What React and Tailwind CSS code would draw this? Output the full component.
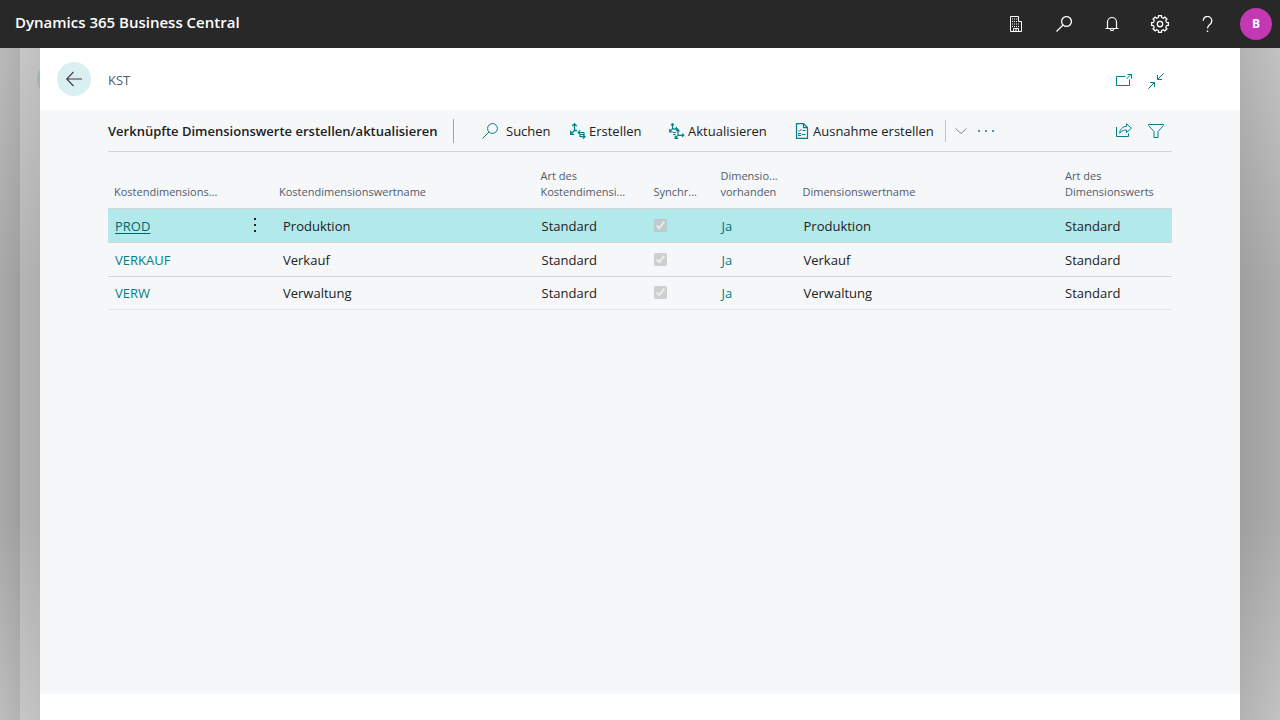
const rows = [
  { code: 'PROD', name: 'Produktion', selected: true },
  { code: 'VERKAUF', name: 'Verkauf' },
  { code: 'VERW', name: 'Verwaltung' },
]

const Icon = ({ size = 'w-4 h-4', children }) => (
  <svg viewBox="0 0 16 16" className={`${size} shrink-0`} fill="none" stroke="currentColor" aria-hidden="true">
    {children}
  </svg>
)

const BuildingIcon = () => (
  <Icon>
    <path d="M2.5 15.5V.5h8v5h3v10z M5.5 15.5v-3h5v3 M8 12.5v3" />
    <path d="M4 3h1m1 0h1m1 0h1M4 5.5h1m1 0h1m1 0h1M4 8h1m1 0h1m1 0h1m1 0h1M4 10.5h1m1 0h1m1 0h1m1 0h1" />
  </Icon>
)

const SearchIcon = ({ strokeWidth = 1 }) => (
  <Icon>
    <g strokeWidth={strokeWidth}>
      <circle cx="10.5" cy="5.5" r="4.9" />
      <path d="M7 9 .5 15.5" />
    </g>
  </Icon>
)

const BellIcon = () => (
  <Icon>
    <path d="M1.5 12.5h13 M3.5 12.5V6a4.5 4.5 0 0 1 9 0v6.5 M6.2 12.8a1.8 1.8 0 0 0 3.6 0" strokeWidth="1.2" />
  </Icon>
)

const teeth = [0, 45, 90, 135, 180, 225, 270, 315]

const GearIcon = () => (
  <Icon size="w-[18px] h-[18px]">
    <circle cx="8" cy="8" r="2.4" strokeWidth="1.2" />
    {teeth.map(a => (
      <path key={a} d="M5.7 2.5 6.6 2.1 6.7.6h2.6l.1 1.5.9.4" transform={`rotate(${a} 8 8)`} strokeWidth="1.2" />
    ))}
  </Icon>
)

const HelpIcon = () => (
  <Icon>
    <path d="M3.2 4.8a4.3 4.3 0 1 1 7.2 3.1C8.8 9.3 7.5 10 7.5 12.5" strokeWidth="1.3" />
    <path d="M6.8 15.2h1.4" strokeWidth="1.5" />
  </Icon>
)

const BackIcon = () => (
  <Icon>
    <path d="M16 8H.8M7.5 1 .7 8l6.8 7" strokeWidth="1.1" />
  </Icon>
)

const PopoutIcon = () => (
  <Icon>
    <path d="M9.5 3.5H.5v9h13v-6 M10.5 6l4.7-4.7 M11.5 1.5h4v4" />
  </Icon>
)

const CollapseIcon = () => (
  <Icon>
    <path d="M15.7.3 9.5 6.5 M9.5 2v4.5H14 M.3 15.7l6.2-6.2 M2 9.5h4.5V14" />
  </Icon>
)

const CreateIcon = () => (
  <Icon>
    <path d="M4.5.8v6.7L1 11 M2.3 3 4.5.8 6.7 3 M.7 7.8v3.5h3.5 M4.5 7.5h2.7" strokeWidth="1.3" />
    <path d="M14 9.5H8.3 M10.3 7.3 8.1 9.5l2.2 2.2 M14 9.5v2H10v2.2h5 M13 11.7l2 2-2 2" strokeWidth="1.2" />
  </Icon>
)

const UpdateIcon = () => (
  <Icon>
    <path d="M3.5.7v5.1L.9 8.7 M2 2.2 3.5.7 5 2.2 M.7 6v3h3 M3.5 5.8h4.7 M6.8 4.2l1.6 1.6-1.6 1.6" strokeWidth="1.2" />
    <path d="M9 6.7v5.6l-2.5 2.9 M7.5 8.2 9 6.7l1.5 1.5 M6.2 12.4v3h3 M9 12.3h5.7 M13.2 10.7l1.6 1.6-1.6 1.6 M4 9.5h3M4 11.5h2.5" strokeWidth="1.2" />
  </Icon>
)

const ChecklistIcon = () => (
  <Icon>
    <path d="M2.5.6h7l4 4v10.8h-11z M9.5.6v4h4" strokeWidth="1.2" />
    <path d="m4.5 7.3 1 1 2-2.3 M8.5 7.5h3 M8 11.5h3.5" />
    <rect x="4.7" y="10.5" width="2" height="2" />
  </Icon>
)

const ShareIcon = () => (
  <Icon>
    <path d="M.5 4v9.5h12v-3" />
    <path d="M10.5.8 15.4 5.3l-4.9 4.2V7C7.5 6.8 5.5 7.8 3.7 10.3 4 6.3 6.5 3.6 10.5 3.3z" />
  </Icon>
)

const FilterIcon = () => (
  <Icon>
    <path d="M.5 1.5h15v1L10 8.5v6H6v-6L.5 2.5z" />
  </Icon>
)

const TopButton = ({ label, children }) => (
  <button aria-label={label} className="w-12 h-12 flex items-center justify-center text-white">{children}</button>
)

const TealButton = ({ label, children }) => (
  <button aria-label={label} className="w-8 h-8 flex items-center justify-center text-[#008089]">{children}</button>
)

const Action = ({ label, className, children }) => (
  <button className={`flex items-center whitespace-nowrap text-[#212121] ${className}`}>
    <span className="text-[#008089]">{children}</span>
    <span className="pt-[2px]">{label}</span>
  </button>
)

const Th = ({ children, pad = 'pl-[6px]' }) => (
  <th scope="col" className={`${pad} pb-2 align-bottom text-left font-normal text-[11px] leading-4 text-[#505c6d] whitespace-nowrap`}>
    {children}
  </th>
)

const Row = ({ row }) => (
  <tr className={`h-[34px] border-b border-[#d0d4d9] last:h-[33px] last:border-[#e2e4e7] ${row.selected ? 'bg-[#b2e9eb]' : ''}`}>
    <td className="pl-[7px] pt-[3px]">
      <a href="#" className={row.selected ? 'text-[#00666d] underline underline-offset-2' : 'text-[#008089]'}>{row.code}</a>
    </td>
    <td>
      {row.selected && (
        <button aria-label="Weitere Optionen" className="w-full flex justify-center text-[#212121]">
          <svg viewBox="0 0 16 16" className="w-4 h-4" fill="currentColor" aria-hidden="true">
            <path d="M7 1h2v2H7zM7 7h2v2H7zM7 13h2v2H7z" />
          </svg>
        </button>
      )}
    </td>
    <td className="pl-[10px] pt-[3px]">{row.name}</td>
    <td className="pl-[7px] pt-[3px]">Standard</td>
    <td className="pl-[6px]">
      <input type="checkbox" checked disabled readOnly aria-label={`Synchronisiert ${row.code}`} className="block w-[13px] h-[13px]" />
    </td>
    <td className="pl-[7px] pt-[3px]"><a href="#" className={row.selected ? 'text-[#00727a]' : 'text-[#008089]'}>Ja</a></td>
    <td className="pl-[7px] pt-[3px]">{row.name}</td>
    <td className="pl-[7px] pt-[3px]">Standard</td>
  </tr>
)

export default function App() {
  return (
    <div className="min-h-screen flex flex-col bg-[#c4c4c4] font-['Open_Sans',sans-serif] text-[13px] text-[#212121]">
      {/* Top bar */}
      <header className="h-12 bg-[#282828] flex items-center pl-[15px] pr-2 text-white">
        <h1 className="flex-1 text-[15px] font-semibold pb-1">Dynamics 365 Business Central</h1>
        <TopButton label="Unternehmen"><BuildingIcon /></TopButton>
        <TopButton label="Suchen"><SearchIcon strokeWidth={1.3} /></TopButton>
        <TopButton label="Benachrichtigungen"><BellIcon /></TopButton>
        <TopButton label="Einstellungen"><GearIcon /></TopButton>
        <TopButton label="Hilfe"><HelpIcon /></TopButton>
        <button className="w-8 h-8 ml-2 rounded-full bg-[#c239b3] text-xs font-bold">B</button>
      </header>

      <div className="flex-1 flex">
        {/* Stacked pages behind the current one */}
        <div className="w-5 bg-[linear-gradient(to_right,#00000000,#0000000f),linear-gradient(to_bottom,#bababa,#a8a8a8_35%,#a8a8a8_70%,#bdbdbd)]" />
        <div className="w-5 pt-[14px] flex items-start justify-end bg-[linear-gradient(to_right,#00000000,#00000008),linear-gradient(to_bottom,#c6c6c6,#b4b4b4_35%,#b4b4b4_70%,#c6c6c6)]">
          <div className="w-[3px] h-[34px] overflow-hidden">
            <div className="w-[34px] h-[34px] rounded-full bg-[#a4b2b3]" />
          </div>
        </div>

        <main className="flex-1 min-w-0 flex flex-col bg-white">
          <div className="h-[62px] flex items-center pl-[17px] pr-[68px]">
            <button aria-label="Zurück" className="w-[34px] h-[34px] rounded-full bg-[#d9eff1] text-[#3b3b3b] flex items-center justify-center">
              <BackIcon />
            </button>
            <h2 className="flex-1 pl-[17px] pt-1 text-[13px] text-[#505c6d]">KST</h2>
            <div className="flex pt-1">
              <TealButton label="In neuem Fenster öffnen"><PopoutIcon /></TealButton>
              <TealButton label="Verkleinern"><CollapseIcon /></TealButton>
            </div>
          </div>

          <section className="flex-1 bg-[#f5f7f9] px-[68px] mb-[26px]">
            <div className="h-[42px] flex items-center border-b border-[#d0d4d9]">
              <h3 className="text-[13px] font-semibold whitespace-nowrap w-[345px] pt-[2px]">Verknüpfte Dimensionswerte erstellen/aktualisieren</h3>
              <div className="w-px h-6 bg-[#a0a4a9]" />
              <Action label="Suchen" className="ml-7 gap-2 w-[88px]"><SearchIcon /></Action>
              <Action label="Erstellen" className="gap-[3px] w-[99px]"><CreateIcon /></Action>
              <Action label="Aktualisieren" className="gap-[3px] w-[125px]"><UpdateIcon /></Action>
              <Action label="Ausnahme erstellen" className="gap-[3px] w-[151px]"><ChecklistIcon /></Action>
              <div className="w-px h-[22px] bg-[#bfc3c7]" />
              <button aria-label="Mehr anzeigen" className="w-[30px] h-6 flex items-center justify-center text-[#808588]">
                <Icon><path d="m2.5 5.5 5.5 5 5.5-5" /></Icon>
              </button>
              <button aria-label="Weitere Aktionen" className="w-5 h-6 flex items-center justify-center text-[#3a9fa6]">
                <svg viewBox="0 0 16 16" className="w-4 h-4" fill="currentColor" aria-hidden="true">
                  <path d="M0 7h2v2H0zM7 7h2v2H7zM14 7h2v2h-2z" />
                </svg>
              </button>
              <div className="flex-1" />
              <TealButton label="Teilen"><ShareIcon /></TealButton>
              <TealButton label="Filter"><FilterIcon /></TealButton>
            </div>

            <table className="w-full table-fixed border-collapse">
              <colgroup>
                <col className="w-[128px]" />
                <col className="w-[37px]" />
                <col />
                <col className="w-[113px]" />
                <col className="w-[67px]" />
                <col className="w-[82px]" />
                <col />
                <col className="w-[114px]" />
              </colgroup>
              <thead>
                <tr className="h-14 border-b border-[#d0d4d9]">
                  <Th>Kostendimensions...</Th>
                  <td />
                  <Th>Kostendimensionswertname</Th>
                  <Th>Art des<br />Kostendimensi...</Th>
                  <Th>Synchr...</Th>
                  <Th>Dimensio...<br />vorhanden</Th>
                  <Th>Dimensionswertname</Th>
                  <Th pad="pl-[7px]">Art des<br />Dimensionswerts</Th>
                </tr>
              </thead>
              <tbody>
                {rows.map(row => <Row key={row.code} row={row} />)}
              </tbody>
            </table>
          </section>
        </main>

        <div className="w-10 bg-[linear-gradient(to_right,#00000014,#00000000),linear-gradient(to_bottom,#c2c2c2,#acacac_35%,#acacac_70%,#c2c2c2)]" />
      </div>
    </div>
  )
}
